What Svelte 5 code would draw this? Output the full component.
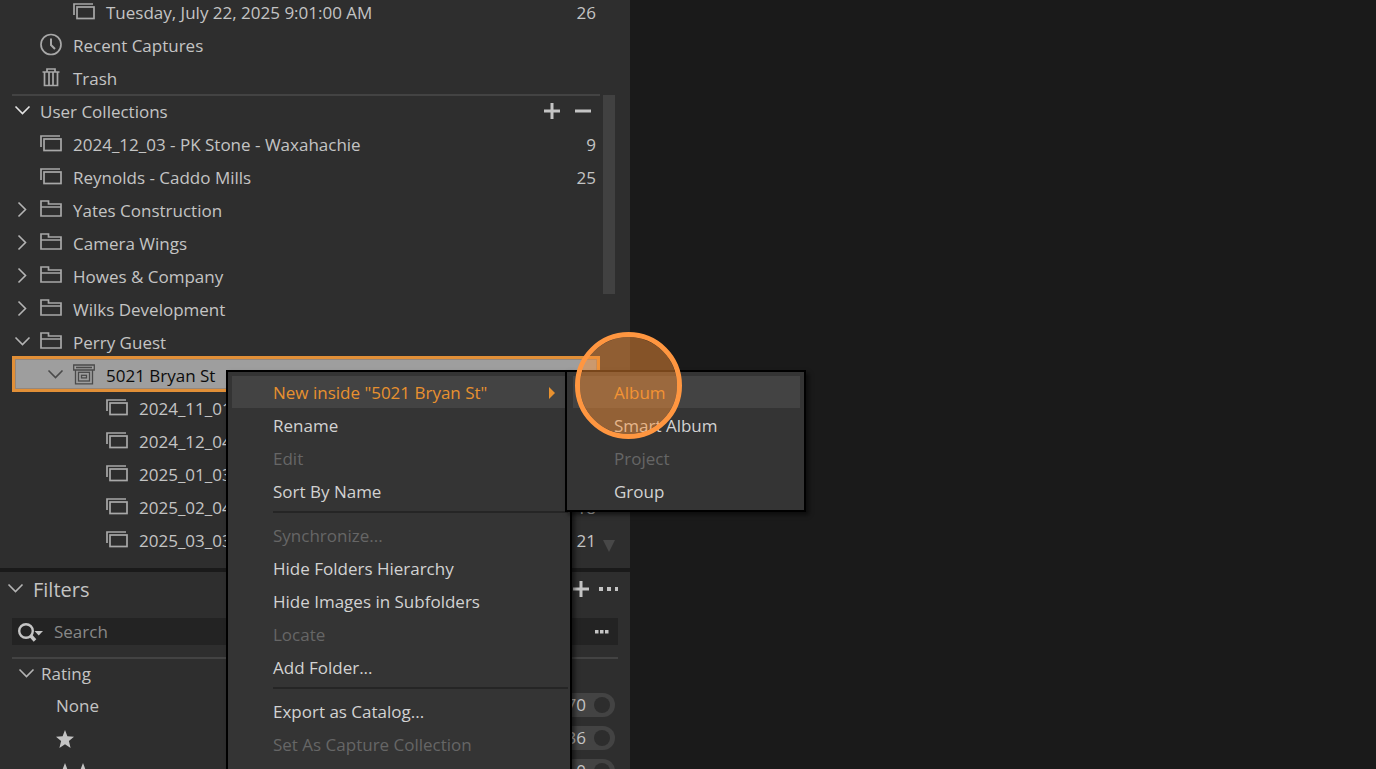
<script lang="ts">
  type Row = { label: string; depth: number; icon: string; count?: string; open?: boolean; selected?: boolean };
  type Item = { label: string; disabled?: boolean; active?: boolean; arrow?: boolean };

  const catalog: Row[] = [
    { label: 'Tuesday, July 22, 2025 9:01:00 AM', depth: 1, icon: 'album', count: '26' },
    { label: 'Recent Captures', depth: 0, icon: 'clock' },
    { label: 'Trash', depth: 0, icon: 'trash' },
  ];

  const collections: Row[] = [
    { label: '2024_12_03 - PK Stone - Waxahachie', depth: 0, icon: 'album', count: '9' },
    { label: 'Reynolds - Caddo Mills', depth: 0, icon: 'album', count: '25' },
    { label: 'Yates Construction', depth: 0, icon: 'group', open: false },
    { label: 'Camera Wings', depth: 0, icon: 'group', open: false },
    { label: 'Howes & Company', depth: 0, icon: 'group', open: false },
    { label: 'Wilks Development', depth: 0, icon: 'group', open: false },
    { label: 'Perry Guest', depth: 0, icon: 'group', open: true },
    { label: '5021 Bryan St', depth: 1, icon: 'project', open: true, selected: true },
    { label: '2024_11_01', depth: 2, icon: 'album' },
    { label: '2024_12_04', depth: 2, icon: 'album' },
    { label: '2025_01_03', depth: 2, icon: 'album' },
    { label: '2025_02_04', depth: 2, icon: 'album', count: '18' },
    { label: '2025_03_03', depth: 2, icon: 'album', count: '21' },
  ];

  // groups are divided by a separator line
  const menu: Item[][] = [
    [
      { label: 'New inside "5021 Bryan St"', active: true, arrow: true },
      { label: 'Rename' },
      { label: 'Edit', disabled: true },
      { label: 'Sort By Name' },
    ],
    [
      { label: 'Synchronize...', disabled: true },
      { label: 'Hide Folders Hierarchy' },
      { label: 'Hide Images in Subfolders' },
      { label: 'Locate', disabled: true },
      { label: 'Add Folder...' },
    ],
    [
      { label: 'Export as Catalog...' },
      { label: 'Set As Capture Collection', disabled: true },
    ],
  ];

  const submenu: Item[] = [
    { label: 'Album', active: true },
    { label: 'Smart Album' },
    { label: 'Project', disabled: true },
    { label: 'Group' },
  ];

  const ratings = [
    { stars: 0, count: '70' },
    { stars: 1, count: '36' },
    { stars: 2, count: '0' },
  ];

  let search = $state('');
</script>

{#snippet chevron(open: boolean)}
  <svg class="chevron" viewBox="0 0 28 24" aria-hidden="true">
    {#if open}
      <path d="M3.5 7.5 L10.5 14.5 L17.5 7.5" />
    {:else}
      <path d="M6.5 4.5 L13.5 11.5 L6.5 18.5" />
    {/if}
  </svg>
{/snippet}

{#snippet icon(name: string)}
  <svg class="icon" class:fine={name === 'project'} viewBox="0 0 22 24" aria-hidden="true">
    {#if name === 'album'}
      <path d="M1 15 V4 H20" />
      <rect x="4" y="7" width="17" height="11.5" />
    {:else if name === 'group'}
      <path d="M1 18 V3 H8.5 V6 H21 V18 Z M1 9 H21" />
    {:else if name === 'clock'}
      <circle cx="11" cy="11.5" r="10" />
      <path d="M11 5.5 V12 L15 16" stroke-width="2" />
    {:else if name === 'trash'}
      <path d="M2.5 6 H19.5 M7 5.5 V3 H15 V5.5 M4.5 6 V19.5 H17.5 V6 M9 6.5 V19.5 M13 6.5 V19.5" />
    {:else}
      <path d="M0.7 2 H21.3 V7 H0.7 Z M3 4.5 H19 M2.5 7 V20.8 H19.5 V7" />
      <rect x="5.5" y="9.3" width="11" height="8.7" />
      <rect x="8.5" y="12.3" width="5" height="2.6" />
    {/if}
  </svg>
{/snippet}

{#snippet treeRow(row: Row)}
  <div
    class="row depth-{row.depth}"
    class:selected={row.selected}
    role="treeitem"
    aria-selected={row.selected ?? false}
    aria-expanded={row.open}
  >
    {#if row.open !== undefined}
      <button class="toggle" aria-label="Toggle {row.label}">{@render chevron(row.open)}</button>
    {:else}
      <span class="toggle"></span>
    {/if}
    {@render icon(row.icon)}
    <span class="label">{row.label}</span>
    {#if row.count}<span class="count">{row.count}</span>{/if}
  </div>
{/snippet}

{#snippet menuItem(item: Item)}
  <button class="item" class:active={item.active} role="menuitem" disabled={item.disabled}>
    {item.label}
    {#if item.arrow}
      <svg class="arrow" viewBox="0 0 8 12" aria-hidden="true"><path d="M1 0 L7 6 L1 12 Z" /></svg>
    {/if}
  </button>
{/snippet}

<main class="app">
  <aside class="sidebar">
    <section class="library">
      <div class="catalog" role="tree" aria-label="Catalog">
        {#each catalog as row}
          {@render treeRow(row)}
        {/each}
      </div>
      <div class="user">
        <div class="tree" role="tree" aria-label="User Collections">
          <div class="row heading" role="treeitem" aria-selected="false" aria-expanded="true">
            <button class="toggle" aria-label="Toggle User Collections">{@render chevron(true)}</button>
            <span class="label">User Collections</span>
            <button class="tool" aria-label="Add collection">
              <svg viewBox="0 0 16 16"><path d="M0 8 H16 M8 0 V16" /></svg>
            </button>
            <button class="tool" aria-label="Remove collection">
              <svg viewBox="0 0 16 16"><path d="M0 8 H16" /></svg>
            </button>
          </div>
          {#each collections as row}
            {@render treeRow(row)}
          {/each}
        </div>
        <div class="scroll">
          <div class="thumb"></div>
          <svg viewBox="0 0 12 12" aria-hidden="true"><path d="M0 0 H12 L6 12 Z" /></svg>
        </div>
      </div>
    </section>

    <section class="filters">
      <header>
        <button class="toggle" aria-label="Toggle filters">{@render chevron(true)}</button>
        <h2>Filters</h2>
        <button class="tool" aria-label="Add filter">
          <svg viewBox="0 0 16 16"><path d="M0 8 H16 M8 0 V16" /></svg>
        </button>
        <button class="more" aria-label="Filter options">
          <svg viewBox="0 0 20 4"><path d="M0 0 h4 v4 h-4 Z M8 0 h4 v4 h-4 Z M16 0 h3 v4 h-3 Z" /></svg>
        </button>
      </header>

      <div class="search">
        <svg class="lens" viewBox="0 0 26 20" aria-hidden="true">
          <circle cx="8" cy="9" r="6.8" />
          <path d="M12.5 13.5 L17 18.5" stroke-width="3.5" />
          <path class="solid" d="M16.5 9 H25 L20.7 13.5 Z" />
        </svg>
        <input type="text" placeholder="Search" aria-label="Search" bind:value={search} />
        <button class="more small" aria-label="Search options">
          <svg viewBox="0 0 14 4"><path d="M0 0 h3.5 v3.5 h-3.5 Z M5 0 h3.5 v3.5 h-3.5 Z M10 0 h3.5 v3.5 h-3.5 Z" /></svg>
        </button>
      </div>

      <div class="rating">
        <div class="row title">
          <button class="toggle" aria-label="Toggle rating">{@render chevron(true)}</button>
          <span class="label">Rating</span>
        </div>
        {#each ratings as rating}
          <div class="row value">
            <span class="label">
              {#if rating.stars === 0}
                None
              {:else}
                {#each { length: rating.stars } as _}
                  <svg class="star" viewBox="0 0 18 18" aria-hidden="true">
                    <path d="M9 0 L11.4 6.3 L18 6.8 L12.9 11 L14.6 18 L9 14.2 L3.4 18 L5.1 11 L0 6.8 L6.6 6.3 Z" />
                  </svg>
                {/each}
              {/if}
            </span>
            <label class="pill">
              {rating.count}
              <input type="checkbox" aria-label="Filter by {rating.stars} stars" />
            </label>
          </div>
        {/each}
      </div>
    </section>
  </aside>

  <div class="menu context" role="menu">
    {#each menu as group, i}
      {#if i > 0}<hr />{/if}
      {#each group as item}
        {@render menuItem(item)}
      {/each}
    {/each}
  </div>

  <div class="menu sub" role="menu">
    {#each submenu as item}
      {@render menuItem(item)}
    {/each}
  </div>

  <div class="click-marker"></div>
</main>

<style>
  :global(body) {
    margin: 0;
    background: #1a1a1a;
  }

  .app {
    position: relative;
    height: 100vh;
    overflow: hidden;
    font-family: 'Open Sans', 'Noto Sans', sans-serif;
    font-size: 17px;
    line-height: 24px;
    color: #c4c4c4;
  }

  .sidebar {
    box-sizing: border-box;
    width: 630px;
    max-width: 100%;
    min-height: 100vh;
    background: #2e2e2e;
  }

  button {
    padding: 0;
    border: 0;
    background: none;
    color: inherit;
    font: inherit;
    text-align: left;
  }

  svg {
    display: block;
    flex: none;
    fill: none;
    stroke: currentColor;
  }

  /* the catalog list is scrolled a little under the top edge */
  .library {
    padding: 0 15px 11px 12px;
    margin-top: -4px;
    border-bottom: 4px solid #1a1a1a;
  }
  .catalog {
    margin-right: 15px;
  }
  .user {
    display: flex;
    gap: 3px;
  }
  .tree {
    flex: 1;
    min-width: 0;
  }

  .row {
    box-sizing: border-box;
    display: flex;
    align-items: center;
    height: 33px;
    padding-right: 4px;
    padding-bottom: 1px;
  }
  .row.depth-1 { padding-left: 33px; }
  .row.depth-2 { padding-left: 66px; }
  .heading {
    height: 34px;
    margin-top: -1px;
    padding-right: 9px;
    padding-bottom: 2px;
    border-top: 2px solid #434343;
  }
  .heading .chevron { color: #e4e4e4; }
  .heading .tool { margin-left: 15px; }

  .row.selected {
    height: 36px;
    margin-top: -3px;
    padding: 1px 4px 0 30px;
    border: 3px solid #e18f37;
    background: #9e9e9e;
    box-shadow: inset 0 0 0 1px #94877c;
    color: #0c0c0c;
  }
  .selected .chevron,
  .selected .icon { color: #4a4a4a; }

  .toggle {
    flex: none;
    width: 28px;
  }
  .chevron {
    width: 28px;
    height: 24px;
    stroke-width: 1.6;
    color: #b4b4b4;
  }
  .icon {
    width: 22px;
    height: 24px;
    margin-right: 11px;
    stroke-width: 1.7;
    color: #a8a8a8;
  }
  .icon.fine {
    stroke-width: 1.3;
  }
  .label,
  .count {
    padding-top: 2px;
  }
  .label {
    flex: 1;
    display: flex;
    white-space: nowrap;
  }

  .tool svg {
    width: 16px;
    height: 16px;
    stroke-width: 3;
  }

  .scroll {
    display: flex;
    flex-direction: column;
    justify-content: space-between;
    width: 12px;
    padding-bottom: 5px;
  }
  .thumb {
    height: 199px;
    background: #414141;
  }
  .scroll svg {
    width: 12px;
    height: 12px;
    fill: #484848;
    stroke: none;
  }

  .filters header {
    display: flex;
    align-items: center;
    height: 33px;
    margin-bottom: 13px;
    padding: 0 11px 0 5px;
  }
  h2 {
    flex: 1;
    margin: 0;
    padding-top: 2px;
    font-size: 20px;
    font-weight: 400;
  }
  .more {
    margin-left: 10px;
  }
  .more svg {
    width: 20px;
    height: 4px;
    fill: currentColor;
    stroke: none;
  }
  .more.small svg {
    width: 14px;
  }

  .search {
    display: flex;
    align-items: center;
    height: 27px;
    margin: 12px;
    padding: 0 9px 0 6px;
    background: #232323;
  }
  .lens {
    width: 26px;
    height: 20px;
    stroke-width: 2.4;
  }
  .lens .solid {
    fill: currentColor;
    stroke: none;
  }
  .search input {
    flex: 1;
    min-width: 0;
    margin-left: 10px;
    padding: 0;
    border: 0;
    outline: 0;
    background: none;
    color: inherit;
    font: inherit;
  }
  .search input::placeholder {
    color: #888;
    opacity: 1;
  }

  .rating {
    margin: 0 12px;
    border-top: 2px solid #434343;
  }
  .rating .row {
    padding: 0 3px 0 4px;
  }
  .rating .toggle { width: 25px; }
  .rating .title { height: 29px; }
  .rating .title .label { padding-top: 0; }
  .rating .row.value { padding-left: 44px; }
  .star {
    width: 18px;
    height: 18px;
    fill: currentColor;
    stroke: none;
  }
  .pill {
    box-sizing: border-box;
    display: flex;
    align-items: center;
    justify-content: flex-end;
    gap: 8px;
    width: 72px;
    height: 24px;
    padding-right: 5px;
    border-radius: 12px;
    background: #434343;
  }
  .pill input {
    appearance: none;
    width: 16px;
    height: 16px;
    margin: 0;
    border-radius: 50%;
    background: #2d2d2d;
  }

  .menu {
    position: absolute;
    top: 370px;
    box-sizing: border-box;
    padding: 4px 4px 2px;
    border: 2px solid #000;
    background: #343434;
    box-shadow: 3px 3px 4px rgba(0, 0, 0, 0.5);
    color: #d2d2d2;
  }
  .context {
    left: 226px;
    bottom: -8px;
    width: 346px;
  }
  .sub {
    left: 565px;
    width: 241px;
    padding-left: 6px;
  }
  .item {
    display: flex;
    align-items: center;
    justify-content: space-between;
    box-sizing: border-box;
    width: 100%;
    height: 32px;
    margin-bottom: 1px;
    padding: 2px 10px 0 41px;
    white-space: nowrap;
  }
  .item.active {
    background: #434343;
    color: #e8912f;
  }
  .item:disabled {
    color: #666;
  }
  .arrow {
    width: 8px;
    height: 12px;
    fill: currentColor;
    stroke: none;
  }
  hr {
    margin: 3px -2px 6px 41px;
    border: 0;
    border-top: 2px solid #252525;
  }
  .item + hr {
    margin-top: 4px;
  }

  .click-marker {
    position: absolute;
    top: 332px;
    left: 575px;
    box-sizing: border-box;
    width: 107px;
    height: 107px;
    border: 5px solid #ff9640;
    border-radius: 50%;
    background: rgba(255, 148, 58, 0.47);
    background-clip: padding-box;
    pointer-events: none;
  }
</style>
